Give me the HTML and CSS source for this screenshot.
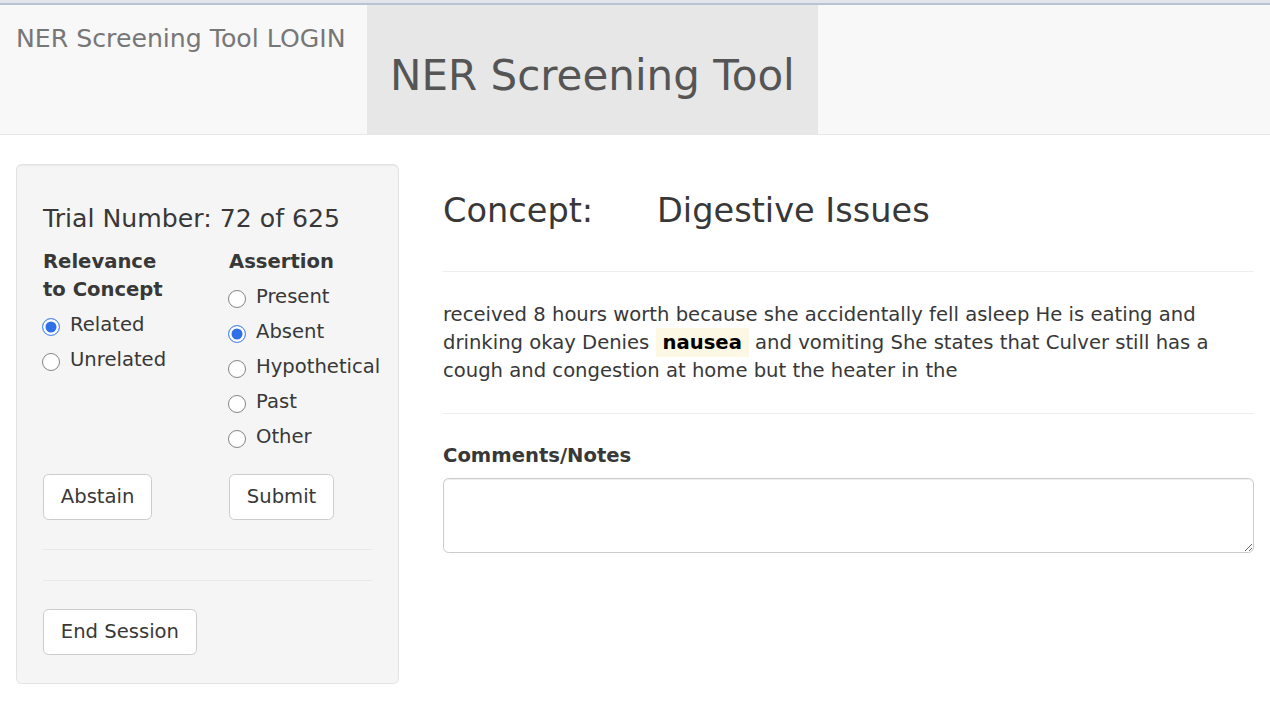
FILE: index.html
```html
<!DOCTYPE html>
<html lang="en">
<head>
<meta charset="utf-8">
<title>NER Screening Tool</title>
<link rel="stylesheet" href="styles.css">
</head>
<body>
<div class="topbar"></div>
<nav class="navbar">
  <div class="brand">NER Screening Tool LOGIN</div>
  <div class="tab"><h2 class="tab-title">NER Screening Tool</h2></div>
</nav>
<main class="layout">
  <aside class="well">
    <h4 class="trial">Trial Number: 72 of 625</h4>
    <div class="cols">
      <div class="group">
        <div class="group-label">Relevance to Concept</div>
        <label class="radio"><input type="radio" name="rel" checked><span>Related</span></label>
        <label class="radio"><input type="radio" name="rel"><span>Unrelated</span></label>
      </div>
      <div class="group">
        <div class="group-label">Assertion</div>
        <label class="radio"><input type="radio" name="as"><span>Present</span></label>
        <label class="radio"><input type="radio" name="as" checked><span>Absent</span></label>
        <label class="radio"><input type="radio" name="as"><span>Hypothetical</span></label>
        <label class="radio"><input type="radio" name="as"><span>Past</span></label>
        <label class="radio"><input type="radio" name="as"><span>Other</span></label>
      </div>
    </div>
    <div class="cols buttons">
      <div><button class="btn" type="button">Abstain</button></div>
      <div><button class="btn" type="button">Submit</button></div>
    </div>
    <hr class="well-hr first">
    <hr class="well-hr second">
    <button class="btn end" type="button">End Session</button>
  </aside>
  <section class="main">
    <h3 class="concept"><span class="concept-label">Concept:</span><span class="concept-value">Digestive Issues</span></h3>
    <hr class="rule top-rule">
    <p class="note"><span class="line">received 8 hours worth because she accidentally fell asleep He is eating and</span><br><span class="line">drinking okay Denies</span> <mark class="hl">nausea</mark> <span class="line">and vomiting She states that Culver still has a</span><br><span class="line">cough and congestion at home but the heater in the</span></p>
    <hr class="rule bottom-rule">
    <label class="comments-label" for="notes">Comments/Notes</label>
    <textarea id="notes" class="comments"></textarea>
  </section>
</main>
</body>
</html>
```
FILE: styles.css
```css
html, body {
  margin: 0;
  padding: 0;
  background: #fff;
}
body {
  font-family: "DejaVu Sans", "Noto Sans", sans-serif;
  font-size: 19.6px;
  line-height: 28px;
  color: #383838;
}

.topbar {
  height: 3px;
  background: #e3e5ec;
  border-bottom: 2px solid #b9c3d4;
}

.navbar {
  display: flex;
  height: 129px;
  background: #f8f8f8;
  border-bottom: 1px solid #e7e7e7;
}
.brand {
  flex: none;
  width: 367px;
  box-sizing: border-box;
  padding: 20px 0 0 16px;
  font-size: 25.2px;
  line-height: 28px;
  color: #777;
  white-space: nowrap;
}
.tab {
  flex: none;
  background: #e7e7e7;
  padding: 0 23px;
}
.tab-title {
  margin: 0;
  padding-top: 48px;
  font-size: 42px;
  line-height: 46px;
  font-weight: normal;
  color: #555;
  white-space: nowrap;
}

.layout {
  display: flex;
  align-items: flex-start;
  gap: 44px;
  padding: 29px 16px 0 16px;
}

.well {
  flex: none;
  width: 383px;
  box-sizing: border-box;
  background: #f5f5f5;
  border: 1px solid #e3e3e3;
  border-radius: 5.6px;
  padding: 26px 26px 28px 26px;
  box-shadow: inset 0 1px 1px rgba(0,0,0,0.05);
}
.trial {
  margin: 14px 0 15px;
  font-size: 25.2px;
  line-height: 28px;
  font-weight: normal;
  color: #383838;
}
.cols {
  display: grid;
  grid-template-columns: 186px 1fr;
}
.group-label {
  font-weight: bold;
  line-height: 28px;
  max-width: 140px;
  margin-bottom: 7px;
}
.radio {
  display: flex;
  align-items: flex-start;
  gap: 10px;
  margin-bottom: 7px;
  line-height: 28px;
  white-space: nowrap;
  cursor: pointer;
}
.radio input {
  appearance: none;
  -webkit-appearance: none;
  flex: none;
  box-sizing: border-box;
  width: 18px;
  height: 18px;
  margin: 7px 0 0 -1px;
  border: 1px solid #858585;
  border-radius: 50%;
  background: #fff;
}
.radio input:checked {
  border: 1.5px solid #5b8ff0;
  background: #2f6fe8;
  box-shadow: inset 0 0 0 2.5px #fff;
}

.buttons {
  margin-top: 16px;
}
.btn {
  display: inline-block;
  font-family: inherit;
  font-size: 19.6px;
  line-height: 28px;
  padding: 8px 16.8px;
  color: #383838;
  background: #fff;
  border: 1px solid #ccc;
  border-radius: 5.6px;
  margin: 0;
  cursor: pointer;
}
.well-hr {
  border: 0;
  border-top: 1px solid #e8e8e8;
  height: 0;
  margin: 0;
}
.well-hr.first { margin-top: 29px; }
.well-hr.second { margin-top: 30px; }
.btn.end { margin-top: 28px; }

.main {
  flex: 1;
  min-width: 0;
}
.concept {
  margin: 28px 0 0;
  font-size: 33.6px;
  line-height: 37px;
  font-weight: normal;
  color: #383838;
  white-space: nowrap;
}
.concept-label {
  display: inline-block;
  width: 214px;
}
.rule {
  border: 0;
  border-top: 1px solid #eee;
  height: 0;
  margin: 28px 0;
}
.rule.top-rule {
  margin-top: 42px;
  margin-bottom: 29px;
}
.note {
  margin: 0;
}
.note .line {
  white-space: nowrap;
}
.hl {
  background: #fcf8e3;
  color: #000;
  font-weight: bold;
  padding: 3px 7px;
}
.comments-label {
  display: block;
  font-weight: bold;
  margin-bottom: 8px;
}
.comments {
  display: block;
  width: 100%;
  height: 75px;
  box-sizing: border-box;
  border: 1px solid #ccc;
  border-radius: 5.6px;
  box-shadow: inset 0 1px 1px rgba(0,0,0,0.075);
  font-family: inherit;
  font-size: 19.6px;
  padding: 8px 17px;
  background: #fff;
  resize: vertical;
}
```
